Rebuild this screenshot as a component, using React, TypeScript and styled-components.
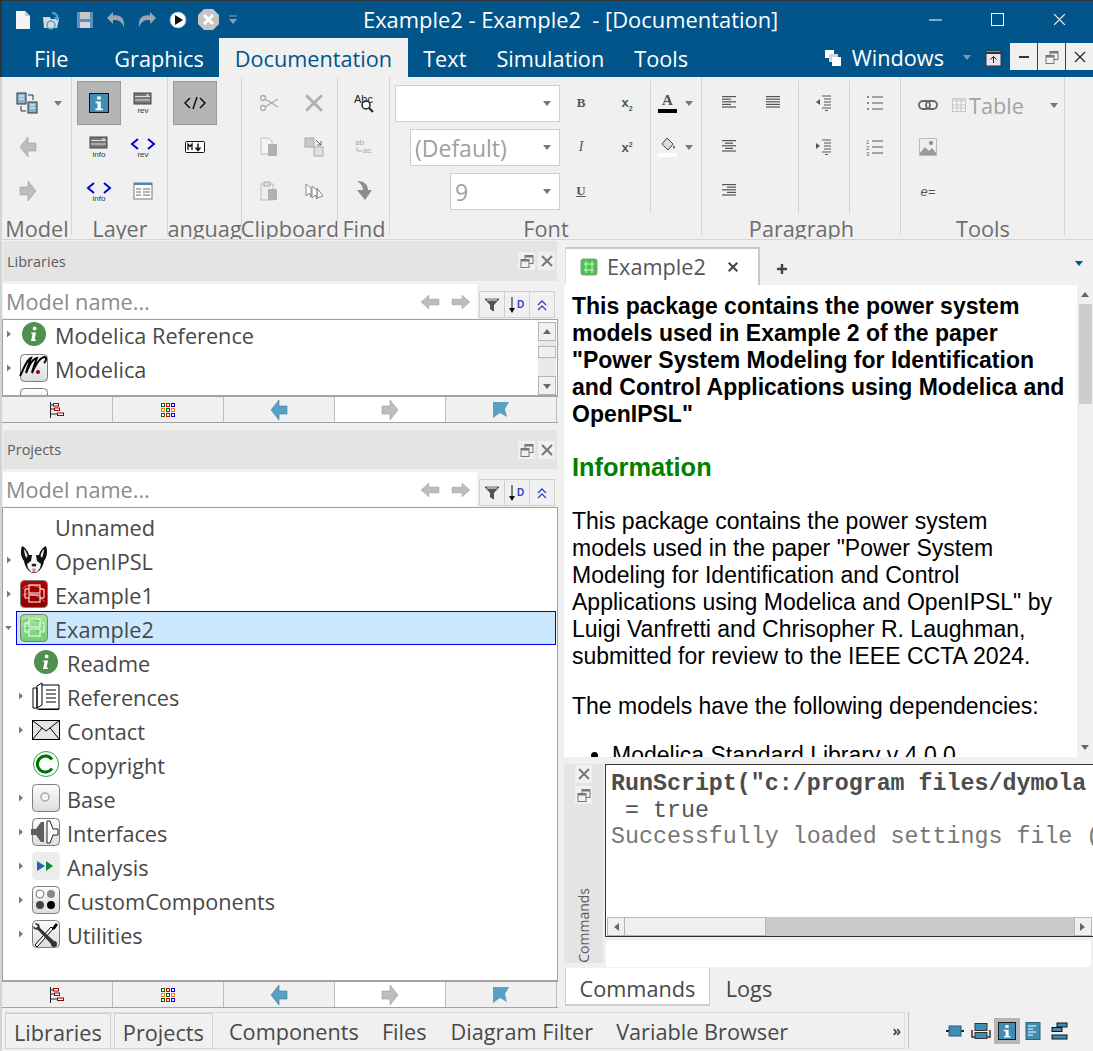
import React from "react";
import styled, { createGlobalStyle } from "styled-components";

const UI_FONT = `"Open Sans", "Noto Sans", sans-serif`;
const UI_SIZE = "21.7px";

const Global = createGlobalStyle`
  html, body { margin: 0; padding: 0; background: #f0f0f0; }
  * { box-sizing: border-box; }
`;

const Window = styled.div`
  width: 1093px;
  height: 1051px;
  overflow: hidden;
  display: flex;
  flex-direction: column;
  padding: 1px 0 0 2px;
  background: linear-gradient(#2e3338 77px, #d4d4d4 77px);
  font-family: ${UI_FONT};
  color: #444;
`;

/* title bar */
const TitleBar = styled.div`
  height: 37px;
  flex: none;
  display: flex;
  align-items: center;
  background: #01558a;
  color: #fff;
`;
const QuickAccess = styled.div`
  width: 244px;
  flex: none;
  display: flex;
  align-items: center;
  padding-left: 5px;
`;
const QatSlot = styled.span<{ $pull?: number }>`
  width: 31px;
  flex: none;
  display: flex;
  justify-content: center;
  margin-left: ${(p) => p.$pull ?? 0}px;
`;
const Title = styled.div`
  flex: none;
  width: 600px;
  padding-left: 117px;
  font-size: 21.9px;
  white-space: pre;
`;
const WinControls = styled.div`
  display: flex;
  align-items: center;
  gap: 47px;
  margin-left: 82px;
`;

/* menu */
const MenuBar = styled.div`
  height: 39px;
  flex: none;
  display: flex;
  align-items: flex-end;
  background: #01558a;
  padding-left: 17px;
`;
const MenuItem = styled.div<{ $active?: boolean; $ml?: number }>`
  flex: none;
  height: 39px;
  line-height: 41px;
  padding: 0 ${(p) => (p.$active ? 16 : 15)}px;
  margin-left: ${(p) => p.$ml ?? 0}px;
  font-size: ${UI_SIZE};
  color: ${(p) => (p.$active ? "#01558a" : "#fff")};
  background: ${(p) => (p.$active ? "#f0f0f0" : "transparent")};
`;
const MenuRight = styled.div`
  margin-left: auto;
  display: flex;
  align-items: center;
  height: 39px;
  color: #fff;
  font-size: ${UI_SIZE};
`;
const WindowsLabel = styled.span`
  margin: 0 19px 0 10px;
`;
const RestoreSlot = styled.span`
  margin: 0 6px 0 14px;
`;
const MdiButton = styled.div`
  width: 27px;
  height: 27px;
  margin-left: 1px;
  background: #f0f0f0;
  display: flex;
  align-items: center;
  justify-content: center;
  margin-top: -2px;
`;

/* ribbon */
const Ribbon = styled.div`
  height: 163px;
  flex: none;
  display: flex;
  background: #f0f0f0;
  border-bottom: 1px solid #d6d6d6;
`;
const RibbonGroup = styled.div<{ $w: number }>`
  width: ${(p) => p.$w}px;
  flex: none;
  height: 162px;
  display: flex;
  flex-direction: column;
  overflow: hidden;
  position: relative;
  &::after {
    content: "";
    position: absolute;
    right: 0;
    top: 0;
    width: 1px;
    height: 158px;
    background: #d4d4d4;
  }
`;
const GroupBody = styled.div<{ $pl?: number }>`
  height: 140px;
  flex: none;
  display: flex;
  padding-top: 4px;
  padding-left: ${(p) => p.$pl ?? 0}px;
`;
const GroupLabel = styled.div`
  white-space: nowrap;
  font-size: ${UI_SIZE};
  line-height: 24px;
  color: #6d6d6d;
  display: flex;
  justify-content: center;
`;
const ToolGrid = styled.div<{ $cols: number; $cw?: number; $pl?: number; $ml?: number }>`
  display: grid;
  grid-template-columns: repeat(${(p) => p.$cols}, ${(p) => p.$cw ?? 44}px);
  grid-auto-rows: 44px;
  flex: none;
  padding-left: ${(p) => p.$pl ?? 0}px;
  margin-left: ${(p) => p.$ml ?? 0}px;
`;
const ToolCell = styled.div<{ $active?: boolean; $w?: number }>`
  display: flex;
  align-items: center;
  justify-content: center;
  ${(p) => (p.$w ? `width: ${p.$w}px;` : "")}
  background: ${(p) => (p.$active ? "#b5b5b5" : "transparent")};
  border: 1px solid ${(p) => (p.$active ? "#9a9a9a" : "transparent")};
`;
const ModelPick = styled.div`
  display: flex;
  align-items: center;
  height: 44px;
  padding-left: 14px;
  gap: 16px;
`;
const Caret = styled.span<{ $c?: string }>`
  width: 0;
  height: 0;
  flex: none;
  border-left: 4px solid transparent;
  border-right: 4px solid transparent;
  border-top: 5px solid ${(p) => p.$c ?? "#777"};
`;
const Glyph = styled.span<{ $f: string; $u?: boolean }>`
  font: ${(p) => p.$f};
  color: #555;
  text-decoration: ${(p) => (p.$u ? "underline" : "none")};
  sub, sup { font-size: 7px; }
`;
const ComboStack = styled.div`
  width: 170px;
  flex: none;
  display: flex;
  flex-direction: column;
  align-items: flex-end;
  gap: 7px;
  padding-top: 4px;
`;
const Combo = styled.div<{ $w: number }>`
  width: ${(p) => p.$w}px;
  height: 37px;
  background: #fff;
  border: 1px solid #cfcfcf;
  display: flex;
  align-items: center;
  padding: 0 8px 0 4px;
  font-size: 23px;
  color: #a0a0a0;
  & > span:first-child { flex: 1; }
`;
const SubGroup = styled.div<{ $w: number; $line?: boolean; $lead?: boolean }>`
  width: ${(p) => p.$w}px;
  flex: none;
  height: 132px;
  border-right: ${(p) => (p.$line ? "1px solid #d4d4d4" : "none")};
  border-left: ${(p) => (p.$lead ? "1px solid #d4d4d4" : "none")};
`;
const ColorRow = styled.div`
  display: flex;
  align-items: center;
  height: 44px;
  padding-left: 7px;
  gap: 8px;
`;
const ColorTool = styled.div<{ $bar: string }>`
  width: 19px;
  display: flex;
  flex-direction: column;
  align-items: center;
  gap: 2px;
  &::after {
    content: "";
    width: 19px;
    height: 4px;
    background: ${(p) => p.$bar};
  }
`;
const TableTool = styled.div`
  display: flex;
  align-items: center;
  height: 44px;
  padding: 4px 0 0 17px;
  font-size: ${UI_SIZE};
  color: #a3a3a3;
`;
const TableLabel = styled.span`
  width: 81px;
  margin-left: 3px;
`;
const ToolsColumn = styled.div`
  width: 164px;
`;

/* main */
const Main = styled.div`
  flex: 1;
  min-height: 0;
  display: flex;
`;
const LeftDock = styled.div`
  width: 561px;
  flex: none;
  display: flex;
  flex-direction: column;
  background: #f0f0f0;
  padding: 1px 6px 0 1px;
  gap: 7px;
`;
const Panel = styled.div<{ $h: number }>`
  height: ${(p) => p.$h}px;
  flex: none;
  display: flex;
  flex-direction: column;
`;
const DockHeader = styled.div<{ $h: number }>`
  height: ${(p) => p.$h}px;
  flex: none;
  background: #e4e4e4;
  display: flex;
  align-items: center;
  justify-content: space-between;
  padding: 0 2px 0 4px;
  font-size: 14.5px;
  color: #5c5c5c;
  margin-bottom: 3px;
`;
const HeaderBtns = styled.div`
  display: flex;
  gap: 3px;
`;
const SmallBtn = styled.div`
  width: 17px;
  height: 18px;
  background: #f0f0f0;
  display: flex;
  align-items: center;
  justify-content: center;
`;
const SearchRow = styled.div`
  height: 34px;
  flex: none;
  display: flex;
  align-items: flex-end;
`;
const SearchInput = styled.div`
  width: 474px;
  height: 34px;
  flex: none;
  background: #fff;
  display: flex;
  align-items: center;
  padding: 1px 6px 0 3px;
  font-size: ${UI_SIZE};
  color: #8b8b8b;
  & > span:first-child { flex: 1; }
  & > svg { margin-left: 11px; }
`;
const FilterGroup = styled.div`
  margin-left: 2px;
  display: flex;
`;
const FilterBtn = styled.div`
  width: 26px;
  height: 27px;
  margin-right: -1px;
  background: #f0f0f0;
  border: 1px solid #cfcfcf;
  display: flex;
  align-items: center;
  justify-content: center;
`;
const TreeBox = styled.div`
  flex: 1;
  min-height: 0;
  margin: 1px -1px 0;
  background: #fff;
  border: 1px solid #a3a3a3;
  border-bottom: 2px solid #a3a3a3;
  display: flex;
  overflow: hidden;
`;
const TreeList = styled.div<{ $mt: number }>`
  flex: 1;
  min-width: 0;
  margin-top: ${(p) => p.$mt}px;
  padding-right: 1px;
`;
const TreeRow = styled.div<{ $level: number }>`
  height: 34px;
  display: flex;
  align-items: center;
  padding-left: ${(p) => 2 + p.$level * 12}px;
`;
const Twisty = styled.span`
  width: 11px;
  flex: none;
  display: flex;
  align-items: center;
`;
const RowBody = styled.div<{ $selected?: boolean }>`
  flex: 1;
  height: 34px;
  display: flex;
  align-items: center;
  gap: 7px;
  padding-left: 2px;
  border: 1px solid ${(p) => (p.$selected ? "#0000e6" : "transparent")};
  background: ${(p) => (p.$selected ? "#cce8ff" : "transparent")};
  font-size: ${UI_SIZE};
  color: #484848;
  white-space: nowrap;
`;
const NodeLabel = styled.span`
  margin-top: 2px;
`;
const IconSlot = styled.span`
  width: 29px;
  height: 29px;
  flex: none;
  display: flex;
  align-items: center;
  justify-content: center;
`;
const VScroll = styled.div`
  width: 18px;
  margin: 2px 1px 0 0;
  flex: none;
  display: flex;
  flex-direction: column;
  background: #e9e9e9;
`;
const ScrollBtn = styled.div`
  height: 19px;
  flex: none;
  background: #f0f0f0;
  border: 1px solid #b5b5b5;
  display: flex;
  align-items: center;
  justify-content: center;
`;
const ScrollThumb = styled.div`
  height: 12px;
  margin-top: 5px;
  background: #f0f0f0;
  border: 1px solid #b5b5b5;
`;
const ScrollGap = styled.div`
  flex: 1;
`;
const NavTabs = styled.div`
  height: 26px;
  flex: none;
  margin: 0 -1px;
  display: grid;
  grid-template-columns: 111px 111px 111px 111px 111px;
  border-bottom: 1px solid #a3a3a3;
`;
const NavTab = styled.div<{ $on?: boolean }>`
  background: ${(p) => (p.$on ? "#fff" : "#f0f0f0")};
  border-right: 1px solid #bdbdbd;
  display: flex;
  align-items: center;
  justify-content: center;
`;

/* right side */
const RightDock = styled.div`
  flex: 1;
  min-width: 0;
  display: flex;
  flex-direction: column;
  background: #f0f0f0;
  padding-top: 5px;
`;
const DocTabs = styled.div`
  height: 40px;
  flex: none;
  display: flex;
  align-items: flex-end;
  padding-left: 2px;
`;
const DocTab = styled.div`
  width: 195px;
  height: 38px;
  background: #fff;
  border-top: 2px solid #c9c9c9;
  border-right: 2px solid #c9c9c9;
  border-left: 1px solid #dcdcdc;
  display: flex;
  align-items: center;
  padding-left: 14px;
  font-size: ${UI_SIZE};
  color: #555;
`;
const DocTabLabel = styled.span`
  margin: -2px 0 0 9px;
  width: 120px;
`;
const PlusSign = styled.span`
  margin-left: 17px;
  margin-bottom: 11px;
  display: flex;
`;
const TabMenu = styled.span`
  margin-left: auto;
  margin-right: 9px;
  margin-bottom: 17px;
  display: flex;
`;
const DocArea = styled.div`
  height: 472px;
  flex: none;
  display: flex;
  padding-left: 1px;
`;
const DocText = styled.div`
  flex: 1;
  min-width: 0;
  background: #fff;
  padding: 8px 0 0 8px;
  overflow: hidden;
  font-family: "Liberation Sans", Arial, sans-serif;
  font-size: 23px;
  line-height: 27px;
  color: #000;
`;
const Lead = styled.div`
  font-weight: bold;
  white-space: pre;
`;
const Heading = styled.div`
  font-weight: bold;
  color: #008000;
  font-size: 25.4px;
  margin: 26px 0 27px;
`;
const Para = styled.div<{ $mb: number }>`
  white-space: pre;
  margin-bottom: ${(p) => p.$mb}px;
`;
const Bullets = styled.ul`
  margin: 0;
  padding-left: 40px;
  white-space: nowrap;
`;
const DocScroll = styled.div`
  width: 16px;
  flex: none;
  display: flex;
  flex-direction: column;
  align-items: center;
  padding: 5px 0;
`;
const DocThumb = styled.div`
  width: 13px;
  height: 100px;
  margin-top: 4px;
  background: #cdcdcd;
`;
const Console = styled.div`
  height: 211px;
  flex: none;
  display: flex;
  padding: 7px 0 0 1px;
`;
const ConsoleStrip = styled.div`
  width: 39px;
  height: 199px;
  flex: none;
  background: #e4e4e4;
  display: flex;
  flex-direction: column;
  align-items: center;
  gap: 3px;
  padding-top: 1px;
`;
const VerticalLabel = styled.div`
  margin-top: auto;
  writing-mode: vertical-rl;
  transform: rotate(180deg);
  font-size: 14px;
  color: #5c5c5c;
`;
const ConsoleMain = styled.div`
  flex: 1;
  min-width: 0;
  margin-left: 2px;
  display: flex;
  flex-direction: column;
`;
const Output = styled.div`
  height: 173px;
  flex: none;
  background: #fff;
  border: 1px solid #333;
  border-right: none;
  display: flex;
  flex-direction: column;
`;
const OutputText = styled.div`
  flex: 1;
  overflow: hidden;
  padding: 6px 0 0 5px;
  font-family: "Liberation Mono", "Courier New", monospace;
  font-size: 23.3px;
  line-height: 26.5px;
  white-space: pre;
`;
const OutLine = styled.div<{ $bold?: boolean; $c: string }>`
  font-weight: ${(p) => (p.$bold ? "bold" : "normal")};
  color: ${(p) => p.$c};
`;
const HScroll = styled.div`
  height: 19px;
  margin: 0 1px;
  flex: none;
  background: #c9c9c9;
  display: flex;
`;
const HBtn = styled.div`
  width: 18px;
  background: #f0f0f0;
  border: 1px solid #b5b5b5;
  display: flex;
  align-items: center;
  justify-content: center;
`;
const HThumb = styled.div`
  width: 141px;
  background: #f0f0f0;
  border: 1px solid #b5b5b5;
  border-left: none;
`;
const CommandInput = styled.div`
  height: 27px;
  flex: none;
  margin: 3px 2px 0 1px;
  background: #fff;
`;
const ConsoleTabs = styled.div`
  height: 40px;
  flex: none;
  display: flex;
  align-items: flex-start;
  padding-left: 2px;
  font-size: ${UI_SIZE};
`;
const ConsoleTab = styled.div<{ $on?: boolean }>`
  width: ${(p) => (p.$on ? 145 : 70)}px;
  height: 38px;
  line-height: 42px;
  text-align: center;
  background: ${(p) => (p.$on ? "#fff" : "transparent")};
  color: #484848;
  ${(p) => (p.$on ? "border: 1px solid #cfcfcf; border-top: none; border-bottom-width: 2px;" : "margin-left: 4px;")}
`;

/* status */
const StatusBar = styled.div`
  height: 41px;
  flex: none;
  display: flex;
  align-items: center;
  background: #f0f0f0;
  padding-left: 3px;
`;
const DockTabs = styled.div`
  width: 900px;
  height: 37px;
  flex: none;
  display: flex;
  align-items: center;
  border: 1px solid #dcdcdc;
  font-size: ${UI_SIZE};
`;
const DockTab = styled.div<{ $x: number; $box?: boolean }>`
  margin-left: ${(p) => p.$x}px;
  height: 36px;
  line-height: 37px;
  padding: 0 ${(p) => (p.$box ? 8 : 0)}px;
  white-space: nowrap;
  color: #484848;
  border: ${(p) => (p.$box ? "1px solid #d0d0d0" : "none")};
`;
const More = styled.span`
  margin-left: auto;
  margin-right: 3px;
  font-size: 14px;
  font-weight: bold;
  line-height: 1;
`;
const StatusSep = styled.div`
  width: 1px;
  height: 37px;
  margin-left: 3px;
  background: #bfbfbf;
`;
const ViewIcons = styled.div`
  display: flex;
  align-items: center;
  margin-left: 33px;
`;
const ViewBtn = styled.div<{ $on?: boolean }>`
  width: 26px;
  height: 26px;
  display: flex;
  align-items: center;
  justify-content: center;
  background: ${(p) => (p.$on ? "#b5b5b5" : "transparent")};
`;

/* ---- drawings ---- */
const Art = styled.svg`
  display: block;
  flex: none;
  overflow: visible;
`;

const Svg = ({ s = 20, w, h, children }: { s?: number; w?: number; h?: number; children: React.ReactNode }) => (
  <Art width={w ?? s} height={h ?? s} viewBox={`0 0 ${w ?? s} ${h ?? s}`}>
    {children}
  </Art>
);

const Triangle = ({ dir, c = "#666" }: { dir: "r" | "d" | "u" | "l"; c?: string }) => {
  const pts = { r: "2,1 7,5 2,9", d: "1,3 9,3 5,8", u: "1,7 9,7 5,2", l: "8,1 3,5 8,9" }[dir];
  return (
    <Svg s={10}>
      <polygon points={pts} fill={c} />
    </Svg>
  );
};

const Twist = ({ open }: { open?: boolean }) => (
  <Svg s={8}>
    <polygon points={open ? "0,2 7,2 3.5,6" : "2,0.5 6,4 2,7.5"} fill="#7a7a7a" />
  </Svg>
);

const BlockArrow = ({ dir, c = "#bdbdbd", d = "#9a9a9a" }: { dir: "l" | "r"; c?: string; d?: string }) => (
  <Svg w={18} h={22}>
    <polygon
      points={dir === "r" ? "1,7 9,7 9,1 17,11 9,21 9,15 1,15" : "17,7 9,7 9,1 1,11 9,21 9,15 17,15"}
      fill={c}
      stroke={d}
      strokeWidth="0.6"
    />
  </Svg>
);

const ThinArrow = ({ dir }: { dir: "l" | "r" }) => (
  <Svg w={20} h={16}>
    <polygon
      points={dir === "r" ? "1,5 11,5 11,1 19,8 11,15 11,11 1,11" : "19,5 9,5 9,1 1,8 9,15 9,11 19,11"}
      fill="#bcbcbc"
      stroke="#a8a8a8"
      strokeWidth="0.5"
    />
  </Svg>
);

const Lines = ({ rows }: { rows: [number, number][] }) => (
  <Svg s={18}>
    {rows.map(([a, b], i) => (
      <rect key={i} x={a} y={2 + i * 2.6} width={b - a} height="1.2" fill="#555" />
    ))}
  </Svg>
);

const InfoSquare = ({ s = 20 }: { s?: number }) => (
  <Art width={s} height={s} viewBox="0 0 20 20">
    <rect x="0.5" y="0.5" width="19" height="19" fill="#3f8db5" stroke="#111" />
    <rect x="8.2" y="3.5" width="3.6" height="3" fill="#fff" />
    <path d="M6.5 8.5h5.3v7h2v1.8H6.5v-1.8h2v-5.2h-2z" fill="#fff" />
  </Art>
);

const ListIcon = ({ label, code }: { label: string; code?: boolean }) => (
  <Svg w={26} h={22}>
    {code ? (
      <path d="M8 3L2 8l6 5M18 3l6 5-6 5" fill="none" stroke="#0000e0" strokeWidth="2" />
    ) : (
      <>
        <rect x="4" y="1" width="17" height="11" fill="#777" stroke="#444" />
        <path d="M5 4.5h15M5 8h15" stroke="#ddd" />
        <rect x="16" y="2.5" width="3" height="1" fill="#fff" />
      </>
    )}
    <text x="13" y="21" textAnchor="middle" fontSize="8" fontFamily="Liberation Sans" fill="#333">
      {label}
    </text>
  </Svg>
);

const LargeInfo = ({ s = 24 }: { s?: number }) => (
  <Art width={s} height={s} viewBox="0 0 24 24">
    <circle cx="12" cy="12" r="12" fill="#4f8f4f" />
    <path d="M12.6 4.5a1.9 1.9 0 1 1 0 3.8 1.9 1.9 0 0 1 0-3.8zM9.5 10.5h4.6l-1.6 7h1.500l-.3 1.500H9l1.500-7H9.200z" fill="#fff" />
  </Art>
);

const Tile = ({ children, top = "#fdfdfd", bot = "#dcdcdc" }: { children?: React.ReactNode; top?: string; bot?: string }) => (
  <Art width="28" height="28" viewBox="0 0 28 28">
    <defs>
      <linearGradient id={`t${top.slice(1)}`} x1="0" y1="0" x2="0" y2="1">
        <stop offset="0" stopColor={top} />
        <stop offset="1" stopColor={bot} />
      </linearGradient>
    </defs>
    <rect x="0.5" y="0.5" width="27" height="27" rx="4" fill={`url(#t${top.slice(1)})`} stroke="#7d7d7d" />
    {children}
  </Art>
);

const PackageArt = ({ stroke, wave }: { stroke: string; wave: string }) => (
  <g fill="none">
    <path d="M3 8c6-5 16-3 22 4M3 15c7-3 15 0 22 7" stroke={wave} />
    <rect x="9" y="5" width="11" height="8" stroke={stroke} />
    <rect x="9" y="15" width="11" height="7" stroke={stroke} />
    <path d="M9 9H5v9h4M20 9h4v9h-4" stroke={stroke} />
  </g>
);

const PackageIcon = ({ kind }: { kind: "red" | "green" }) =>
  kind === "red" ? (
    <Tile top="#b40000" bot="#8f0000">
      <PackageArt stroke="#fff" wave="#e06a8a" />
    </Tile>
  ) : (
    <Tile top="#a6e59a" bot="#72cf74">
      <PackageArt stroke="#f2fff2" wave="#3fb565" />
    </Tile>
  );

const ModelicaIcon = () => (
  <Tile>
    <path
      d="M0 22C4 15 6 6 11 4 9 9 7 15 6 19 9 12 12 5 17 4 15 9 13 14 12 19 15 12 20 3 25 3c2 1 1 4-1 6"
      fill="none"
      stroke="#000"
      strokeWidth="2"
    />
    <circle cx="18" cy="18" r="2" fill="#a00000" />
  </Tile>
);

const DogIcon = () => (
  <Art width="28" height="28" viewBox="0 0 28 28">
    <path d="M2 0c3 1 6 5 7 9h10c1-4 4-8 7-9 2 6 1 11-2 15-1 6-5 12-10 12S5 21 4 15C1 11 0 6 2 0z" fill="#111" />
    <path d="M4 3c2 2 3 4 3.500 7L6 12C5 9 4 6 4 3zM24 3c-2 2-3 4-3.500 7L22 12c1-3 2-6 2-9z" fill="#e6e6e6" />
    <path d="M12 9h4l1 6 4 3-1 4-3 4h-6l-3-4-1-4 4-3z" fill="#f6f6f6" />
    <ellipse cx="14" cy="19" rx="2.500" ry="1.500" fill="#222" />
    <path d="M12 22.500h4l-.8 4h-2.400z" fill="#e9808a" />
  </Art>
);

const BooksIcon = () => (
  <Svg s={28}>
    <path d="M1 6h4v20H1zM5 4l5-3v22l-5 3zM10 3h17v24H5" fill="#fff" stroke="#000" />
    <path d="M14 8h10M14 12h10M14 16h10M14 20h10" stroke="#000" />
    <rect x="7" y="27" width="20" height="1" fill="#000" />
  </Svg>
);

const MailIcon = () => (
  <Svg s={28}>
    <rect x="0.500" y="4.500" width="27" height="19" fill="#e4e4e4" stroke="#000" />
    <path d="M0.500 4.500L14 15 27.500 4.500M0.500 23.500L10 12M27.500 23.500L18 12" fill="none" stroke="#000" />
  </Svg>
);

const CopyIcon = () => (
  <Svg s={28}>
    <circle cx="14" cy="14" r="12.500" fill="none" stroke="#2f9e4a" />
    <path d="M20 9.500a8 8 0 1 0 0 9" fill="none" stroke="#007000" strokeWidth="3" />
  </Svg>
);

const InterfaceIcon = () => (
  <Tile>
    <path d="M-1 11h5l5-7h3v20H9l-5-7h-5z" fill="#5e5e5e" />
    <path d="M15 3h3l3 8h5v6h-5l-3 8h-3z" fill="#fff" stroke="#222" />
  </Tile>
);

const AnalysisIcon = () => (
  <Art width="28" height="28" viewBox="0 0 28 28">
    <rect width="28" height="28" rx="4" fill="#ececec" />
    <polygon points="5,9 13,14 5,19" fill="#2563b8" />
    <polygon points="14,9 21,14 14,19" fill="#0b8a3a" />
  </Art>
);

const ToolsArt = () => (
  <Tile>
    <path d="M3 25L19 7l2 2L5 27z" fill="#fff" stroke="#000" />
    <path d="M20 8l4-5 2 2-4 5z" fill="#000" />
    <path d="M3 3l4 1 1 4 14 13a3 3 0 1 1-3 3L6 10 2 9 1 6l3 2 2-2-3-2z" fill="#333" />
  </Tile>
);

const CloseGlyph = ({ c = "#777", s = 14, w = 2 }: { c?: string; s?: number; w?: number }) => (
  <Art width={s} height={s} viewBox="0 0 14 14">
    <path d="M2 2l10 10M12 2L2 12" stroke={c} strokeWidth={w} fill="none" />
  </Art>
);

const FloatGlyph = () => (
  <Svg s={14}>
    <rect x="5" y="1.500" width="8" height="8" fill="none" stroke="#777" />
    <rect x="5" y="1.500" width="8" height="2" fill="#777" />
    <rect x="1" y="5.500" width="8" height="8" fill="#f0f0f0" stroke="#777" />
    <rect x="1" y="5.500" width="8" height="2" fill="#777" />
  </Svg>
);

const TreeNavIcon = () => (
  <Svg w={14} h={16}>
    <path d="M0.500 0v16M1 3h3M1 7h3M1 12h6" stroke="#222" fill="none" />
    <rect x="3.500" y="1.500" width="5" height="2.500" fill="#fff" stroke="#900" />
    <rect x="4.500" y="6" width="5" height="2.500" fill="#fff" stroke="#900" />
    <rect x="7.500" y="11" width="6" height="2.500" fill="#fff" stroke="#900" />
  </Svg>
);

const GridNavIcon = () => {
  const colors = ["#007000", "#e00000", "#0000e6", "#ff7a1a", "#007000", "#ff7a1a", "#007000", "#e00000", "#0000e6"];
  return (
    <Svg s={16}>
      {colors.map((c, i) => (
        <rect key={i} x={1.5 + (i % 3) * 5} y={1.5 + Math.floor(i / 3) * 5} width="3" height="3" fill="#fff" stroke={c} />
      ))}
    </Svg>
  );
};

const FilterTools = () => (
  <FilterGroup>
    <FilterBtn>
      <Svg s={16}>
        <path d="M1 2h14L9.500 8v6l-3-2V8z" fill="#555" stroke="#222" strokeWidth="0.6" />
        <path d="M3 3h10" stroke="#fff" />
      </Svg>
    </FilterBtn>
    <FilterBtn>
      <Svg w={20} h={18}>
        <path d="M5 1v14" stroke="#111" />
        <path d="M2 12l3 5 3-5z" fill="#111" />
        <text x="10" y="12" fontSize="10" fontWeight="bold" fontFamily="Liberation Sans" fill="#3344c4">
          D
        </text>
      </Svg>
    </FilterBtn>
    <FilterBtn>
      <Svg s={14}>
        <path d="M3 7l4-4 4 4M3 12l4-4 4 4" fill="none" stroke="#3344c4" strokeWidth="1.300" />
      </Svg>
    </FilterBtn>
  </FilterGroup>
);

const NavStrip = () => (
  <NavTabs>
    <NavTab>
      <TreeNavIcon />
    </NavTab>
    <NavTab>
      <GridNavIcon />
    </NavTab>
    <NavTab>
      <BlockArrow dir="l" c="#5a9fc4" d="#3b7ea3" />
    </NavTab>
    <NavTab $on>
      <BlockArrow dir="r" />
    </NavTab>
    <NavTab>
      <Svg s={18}>
        <polygon points="1,1 17,1 13,8 15,16 8,12 1,17" fill="#5a9fc4" />
      </Svg>
    </NavTab>
  </NavTabs>
);

const ViewIcon = ({ kind }: { kind: "box" | "print" | "lines" | "stack" }) => (
  <Svg s={20}>
    {kind === "box" && (
      <>
        <path d="M1 10h18" stroke="#222" strokeWidth="2" />
        <rect x="4" y="5" width="12" height="10" fill="#3f8db5" stroke="#2a5f7d" />
      </>
    )}
    {kind === "print" && (
      <>
        <path d="M1 9v7h18V9" fill="none" stroke="#333" strokeWidth="1.500" />
        <rect x="4" y="2.500" width="12" height="7" fill="#3f8db5" stroke="#333" />
        <rect x="4" y="11.500" width="12" height="6" fill="#3f8db5" stroke="#333" />
      </>
    )}
    {kind === "lines" && (
      <>
        <rect x="3" y="1.500" width="14" height="17" fill="#3f8db5" stroke="#2a5f7d" />
        <path d="M5 5h8M5 8h5M5 11h8M5 14h5" stroke="#fff" />
      </>
    )}
    {kind === "stack" && (
      <>
        <rect x="8" y="2" width="10" height="4" fill="#3f8db5" stroke="#111" />
        <rect x="3" y="6.500" width="10" height="4" fill="#3f8db5" stroke="#111" />
        <rect x="3" y="14" width="15" height="4" fill="#3f8db5" stroke="#111" />
      </>
    )}
  </Svg>
);

const ALIGN_LEFT: [number, number][] = [[2, 16], [2, 11], [2, 16], [2, 11], [2, 16]];
const ALIGN_FULL: [number, number][] = [[2, 16], [2, 16], [2, 16], [2, 16], [2, 16]];
const ALIGN_CENTER: [number, number][] = [[2, 16], [5, 13], [2, 16], [5, 13], [2, 16]];
const ALIGN_RIGHT: [number, number][] = [[2, 16], [7, 16], [2, 16], [7, 16], [2, 16]];

type TreeNode = { name: string; level: number; icon?: React.ReactNode; arrow?: "open" | "closed"; selected?: boolean };

const LIBRARY_TREE: TreeNode[] = [
  { name: "Modelica Reference", level: 0, arrow: "closed", icon: <LargeInfo /> },
  { name: "Modelica", level: 0, arrow: "closed", icon: <ModelicaIcon /> },
  { name: "", level: 0, icon: <Tile /> },
];

const PROJECT_TREE: TreeNode[] = [
  { name: "Unnamed", level: 0 },
  { name: "OpenIPSL", level: 0, arrow: "closed", icon: <DogIcon /> },
  { name: "Example1", level: 0, arrow: "closed", icon: <PackageIcon kind="red" /> },
  { name: "Example2", level: 0, arrow: "open", selected: true, icon: <PackageIcon kind="green" /> },
  { name: "Readme", level: 1, icon: <LargeInfo /> },
  { name: "References", level: 1, arrow: "closed", icon: <BooksIcon /> },
  { name: "Contact", level: 1, arrow: "closed", icon: <MailIcon /> },
  { name: "Copyright", level: 1, icon: <CopyIcon /> },
  {
    name: "Base",
    level: 1,
    arrow: "closed",
    icon: (
      <Tile>
        <circle cx="13" cy="13" r="4" fill="#f4f4f4" stroke="#aaa" strokeWidth="1.500" />
      </Tile>
    ),
  },
  { name: "Interfaces", level: 1, arrow: "closed", icon: <InterfaceIcon /> },
  { name: "Analysis", level: 1, arrow: "closed", icon: <AnalysisIcon /> },
  {
    name: "CustomComponents",
    level: 1,
    arrow: "closed",
    icon: (
      <Tile>
        <circle cx="8" cy="8" r="4" fill="#fff" stroke="#777" />
        <circle cx="19" cy="8" r="4" fill="#888" />
        <circle cx="8" cy="19" r="4" fill="#444" />
        <circle cx="19" cy="19" r="4" fill="#000" />
      </Tile>
    ),
  },
  { name: "Utilities", level: 1, arrow: "closed", icon: <ToolsArt /> },
];

const Tree = ({ nodes, mt, children }: { nodes: TreeNode[]; mt: number; children?: React.ReactNode }) => (
  <TreeBox>
    <TreeList $mt={mt}>
      {nodes.map((n, i) => (
        <TreeRow key={i} $level={n.level}>
          <Twisty>{n.arrow && <Twist open={n.arrow === "open"} />}</Twisty>
          <RowBody $selected={n.selected}>
            <IconSlot>{n.icon}</IconSlot>
            <NodeLabel>{n.name}</NodeLabel>
          </RowBody>
        </TreeRow>
      ))}
    </TreeList>
    {children}
  </TreeBox>
);

const Search = () => (
  <SearchRow>
    <SearchInput>
      <span>Model name...</span>
      <ThinArrow dir="l" />
      <ThinArrow dir="r" />
    </SearchInput>
    <FilterTools />
  </SearchRow>
);

const Header = ({ title, h }: { title: string; h: number }) => (
  <DockHeader $h={h}>
    {title}
    <HeaderBtns>
      <SmallBtn>
        <FloatGlyph />
      </SmallBtn>
      <SmallBtn>
        <CloseGlyph />
      </SmallBtn>
    </HeaderBtns>
  </DockHeader>
);

export default function App() {
  return (
    <Window>
      <Global />
      <TitleBar>
        <QuickAccess>
          <QatSlot>
            <Svg w={16} h={20}>
              <path d="M1 1h9l5 5v13H1z" fill="#f4f4f4" />
              <path d="M10 1v5h5z" fill="#c8c8c8" />
            </Svg>
          </QatSlot>
          <QatSlot $pull={-2}>
            <Svg w={20} h={20}>
              <path d="M1 7h7l1 2h8l-2 9H2z" fill="#d9d9d9" />
              <path d="M10 2c4 0 6 2 6 5h2l-3 4-3-4h2c0-2-2-3-4-3z" fill="#4f9fce" />
              <circle cx="9" cy="15" r="4" fill="none" stroke="#4f9fce" strokeWidth="1.500" />
            </Svg>
          </QatSlot>
          <QatSlot $pull={2}>
            <Svg w={18} h={18}>
              <path d="M1 1h16v16H1z" fill="#5a92bd" />
              <rect x="4" y="1" width="10" height="7" fill="#c7c7c7" />
              <rect x="4" y="11" width="10" height="6" fill="#d7d7d7" />
            </Svg>
          </QatSlot>
          <QatSlot>
            <Svg w={20} h={18}>
              <path d="M1 7l6-6v3.500c7-1 12 2 11 12-2-6-5-7.500-11-7.500V13z" fill="#9aa7b0" />
            </Svg>
          </QatSlot>
          <QatSlot>
            <Svg w={20} h={18}>
              <path d="M19 7l-6-6v3.500C6 3.500 1 6.500 2 16.500c2-6 5-7.500 11-7.500V13z" fill="#9aa7b0" />
            </Svg>
          </QatSlot>
          <QatSlot>
            <Svg s={18}>
              <circle cx="9" cy="9" r="8" fill="#fff" stroke="#7fb2d2" />
              <polygon points="6,4 14,9 6,14" fill="#111" />
            </Svg>
          </QatSlot>
          <QatSlot>
            <Svg s={21}>
              <polygon points="6,0 15,0 21,6 21,15 15,21 6,21 0,15 0,6" fill="#c4c4c4" />
              <path d="M6 6l9 9M15 6l-9 9" stroke="#fff" strokeWidth="3" />
            </Svg>
          </QatSlot>
          <QatSlot $pull={-7}>
            <Svg w={8} h={10}>
              <path d="M0 1h8" stroke="#8aa0ad" />
              <polygon points="0,4 8,4 4,9" fill="#8aa0ad" />
            </Svg>
          </QatSlot>
        </QuickAccess>
        <Title>Example2 - Example2  - [Documentation]</Title>
        <WinControls>
          <Svg s={15}>
            <path d="M1 8h13" stroke="#fff" />
          </Svg>
          <Svg s={15}>
            <rect x="1.500" y="1.500" width="12" height="12" fill="none" stroke="#fff" />
          </Svg>
          <CloseGlyph c="#fff" s={15} w={1} />
        </WinControls>
      </TitleBar>

      <MenuBar>
        <MenuItem>File</MenuItem>
        <MenuItem $ml={16}>Graphics</MenuItem>
        <MenuItem $active>Documentation</MenuItem>
        <MenuItem>Text</MenuItem>
        <MenuItem>Simulation</MenuItem>
        <MenuItem>Tools</MenuItem>
        <MenuRight>
          <Svg s={18}>
            <rect x="1" y="1" width="9" height="8" fill="#fff" />
            <rect x="5" y="5" width="9" height="8" fill="#cfd8e0" />
            <rect x="8" y="8" width="9" height="9" fill="#fff" />
          </Svg>
          <WindowsLabel>Windows</WindowsLabel>
          <Caret $c="#7f9bb0" />
          <RestoreSlot>
            <Svg s={18}>
              <rect x="1" y="2" width="15" height="15" fill="#e8e8e8" stroke="#333" />
              <path d="M1 4h15" stroke="#333" strokeWidth="2" />
              <path d="M8.500 14V8M5.500 10.500l3-3 3 3" stroke="#222" fill="none" />
            </Svg>
          </RestoreSlot>
          <MdiButton>
            <Svg s={14}>
              <path d="M2 7h10" stroke="#333" strokeWidth="2" />
            </Svg>
          </MdiButton>
          <MdiButton>
            <FloatGlyph />
          </MdiButton>
          <MdiButton>
            <CloseGlyph c="#222" w={1.2} />
          </MdiButton>
        </MenuRight>
      </MenuBar>

      <Ribbon>
        <RibbonGroup $w={70}>
          <GroupBody>
            <ToolGrid $cols={1} $cw={69}>
              <ModelPick>
                <Svg s={22}>
                  <rect x="1" y="1" width="9" height="11" fill="#7fb3d0" stroke="#333" />
                  <rect x="12" y="10" width="9" height="11" fill="#7fb3d0" stroke="#333" />
                  <path d="M3 4h5M3 7h5M14 13h5M14 16h5" stroke="#fff" />
                  <path d="M12 3h5v5M10 19H5v-5" fill="none" stroke="#333" />
                </Svg>
                <Caret />
              </ModelPick>
              <ToolCell $w={52}>
                <BlockArrow dir="l" />
              </ToolCell>
              <ToolCell $w={52}>
                <BlockArrow dir="r" />
              </ToolCell>
            </ToolGrid>
          </GroupBody>
          <GroupLabel>Model</GroupLabel>
        </RibbonGroup>

        <RibbonGroup $w={96}>
          <GroupBody $pl={5}>
            <ToolGrid $cols={2}>
              <ToolCell $active>
                <InfoSquare />
              </ToolCell>
              <ToolCell>
                <ListIcon label="rev" />
              </ToolCell>
              <ToolCell>
                <ListIcon label="info" />
              </ToolCell>
              <ToolCell>
                <ListIcon label="rev" code />
              </ToolCell>
              <ToolCell>
                <ListIcon label="info" code />
              </ToolCell>
              <ToolCell>
                <Svg w={20} h={18}>
                  <rect x="1" y="1" width="18" height="16" fill="#fff" stroke="#777" />
                  <rect x="1" y="1" width="18" height="2" fill="#3f8db5" />
                  <path d="M3 7h5M10 7h7M3 10h5M10 10h7M3 13h5M10 13h7" stroke="#666" />
                </Svg>
              </ToolCell>
            </ToolGrid>
          </GroupBody>
          <GroupLabel>Layer</GroupLabel>
        </RibbonGroup>

        <RibbonGroup $w={74}>
          <GroupBody $pl={5}>
            <ToolGrid $cols={1}>
              <ToolCell $active>
                <Svg w={22} h={14}>
                  <path d="M6 2L1 7l5 5M16 2l5 5-5 5M13 1L9 13" fill="none" stroke="#111" strokeWidth="1.500" />
                </Svg>
              </ToolCell>
              <ToolCell>
                <Svg w={20} h={12}>
                  <rect x="0.500" y="0.500" width="19" height="11" rx="1" fill="#fff" stroke="#111" />
                  <path d="M3 9V3l2 2.500L7 3v6" fill="none" stroke="#111" strokeWidth="1.300" />
                  <path d="M13 2.500V8M10.500 6.500L13 9.500l2.500-3" fill="none" stroke="#111" strokeWidth="1.500" />
                </Svg>
              </ToolCell>
            </ToolGrid>
          </GroupBody>
          <GroupLabel>Language</GroupLabel>
        </RibbonGroup>

        <RibbonGroup $w={96}>
          <GroupBody $pl={4}>
            <ToolGrid $cols={2} $cw={45}>
              <ToolCell>
                <Svg s={20}>
                  <circle cx="4" cy="5" r="2.500" fill="none" stroke="#aaa" strokeWidth="1.300" />
                  <circle cx="4" cy="15" r="2.500" fill="none" stroke="#aaa" strokeWidth="1.300" />
                  <path d="M6 6l13 8M6 14l13-8" stroke="#aaa" strokeWidth="1.300" />
                </Svg>
              </ToolCell>
              <ToolCell>
                <CloseGlyph c="#b0b0b0" s={22} w={1.8} />
              </ToolCell>
              <ToolCell>
                <Svg s={20}>
                  <path d="M2 1h8l3 3v13H2z" fill="#f4f4f4" stroke="#c0c0c0" />
                  <rect x="9" y="7" width="9" height="12" fill="#b0b0b0" />
                </Svg>
              </ToolCell>
              <ToolCell>
                <Svg s={20}>
                  <rect x="1" y="1" width="9" height="9" fill="#c9c9c9" stroke="#aaa" />
                  <rect x="10" y="10" width="9" height="9" fill="#e0e0e0" stroke="#aaa" />
                  <path d="M12 3l5 5M17 4v4h-4" fill="none" stroke="#666" />
                </Svg>
              </ToolCell>
              <ToolCell>
                <Svg s={20}>
                  <rect x="2" y="3" width="12" height="16" fill="#eee" stroke="#bbb" />
                  <rect x="5" y="1" width="6" height="4" fill="#ddd" stroke="#aaa" />
                  <rect x="9" y="8" width="9" height="11" fill="#b0b0b0" />
                </Svg>
              </ToolCell>
              <ToolCell>
                <Svg s={20}>
                  <path d="M2 3v12l3-3 2 4V7zM8 5v12l3-3 2 4V9zM13 7v10l6-2z" fill="#fff" stroke="#888" />
                </Svg>
              </ToolCell>
            </ToolGrid>
          </GroupBody>
          <GroupLabel>Clipboard</GroupLabel>
        </RibbonGroup>

        <RibbonGroup $w={52}>
          <GroupBody>
            <ToolGrid $cols={1} $cw={52}>
              <ToolCell>
                <Svg w={20} h={20}>
                  <text x="0" y="10" fontSize="11" fontFamily="Liberation Sans" fill="#222">
                    Abc
                  </text>
                  <circle cx="12" cy="12" r="4" fill="#fff" fillOpacity="0.7" stroke="#222" strokeWidth="1.500" />
                  <path d="M15 15l4 4" stroke="#222" strokeWidth="2" />
                </Svg>
              </ToolCell>
              <ToolCell>
                <Svg w={20} h={18}>
                  <text x="1" y="7" fontSize="8" fontFamily="Liberation Sans" fill="#aaa">
                    ab
                  </text>
                  <text x="9" y="15" fontSize="8" fontFamily="Liberation Sans" fill="#aaa">
                    ac
                  </text>
                  <path d="M3 9v4h5" fill="none" stroke="#aaa" />
                </Svg>
              </ToolCell>
              <ToolCell>
                <Svg w={18} h={22}>
                  <path d="M2 1c8 0 11 4 11 9h4l-7 10-8-10h6c0-4-3-7-6-9z" fill="#8d8d8d" />
                </Svg>
              </ToolCell>
            </ToolGrid>
          </GroupBody>
          <GroupLabel>Find</GroupLabel>
        </RibbonGroup>

        <RibbonGroup $w={312}>
          <GroupBody>
            <ComboStack>
              <Combo $w={165}>
                <span />
                <Caret />
              </Combo>
              <Combo $w={150}>
                <span>(Default)</span>
                <Caret />
              </Combo>
              <Combo $w={110}>
                <span>9</span>
                <Caret />
              </Combo>
            </ComboStack>
            <ToolGrid $cols={2} $cw={46} $ml={-2}>
              <ToolCell>
                <Glyph $f="bold 13px 'Liberation Serif'">B</Glyph>
              </ToolCell>
              <ToolCell>
                <Glyph $f="bold 13px 'Liberation Sans'">
                  x<sub>2</sub>
                </Glyph>
              </ToolCell>
              <ToolCell>
                <Glyph $f="italic 14px 'Liberation Serif'">I</Glyph>
              </ToolCell>
              <ToolCell>
                <Glyph $f="bold 13px 'Liberation Sans'">
                  x<sup>2</sup>
                </Glyph>
              </ToolCell>
              <ToolCell>
                <Glyph $f="bold 13px 'Liberation Serif'" $u>
                  U
                </Glyph>
              </ToolCell>
            </ToolGrid>
            <SubGroup $w={50} $lead>
              <ColorRow>
                <ColorTool $bar="#000">
                  <Glyph $f="bold 15px/14px 'Liberation Serif'">A</Glyph>
                </ColorTool>
                <Caret />
              </ColorRow>
              <ColorRow>
                <ColorTool $bar="#fff">
                  <Svg w={16} h={14}>
                    <path d="M7 1l6 6-5 6-6-6z" fill="#ddd" stroke="#444" />
                    <path d="M14 8c1 2 1 3 0 4-1-1-1-2 0-4z" fill="#444" />
                  </Svg>
                </ColorTool>
                <Caret />
              </ColorRow>
            </SubGroup>
          </GroupBody>
          <GroupLabel>Font</GroupLabel>
        </RibbonGroup>

        <RibbonGroup $w={199}>
          <GroupBody>
            <SubGroup $w={97} $line>
              <ToolGrid $cols={2} $cw={44} $pl={5}>
                <ToolCell>
                  <Lines rows={ALIGN_LEFT} />
                </ToolCell>
                <ToolCell>
                  <Lines rows={ALIGN_FULL} />
                </ToolCell>
                <ToolCell>
                  <Lines rows={ALIGN_CENTER} />
                </ToolCell>
                <span />
                <ToolCell>
                  <Lines rows={ALIGN_RIGHT} />
                </ToolCell>
              </ToolGrid>
            </SubGroup>
            <SubGroup $w={51} $line>
              <ToolGrid $cols={1} $cw={50}>
                <ToolCell>
                  <Svg s={18}>
                    <path d="M7 2h9M9 5h7M9 8h7M9 11h7M7 14h9M10 16.500h3" stroke="#555" fill="none" />
                    <path d="M1 8l4-3v6z" fill="#555" />
                  </Svg>
                </ToolCell>
                <ToolCell>
                  <Svg s={18}>
                    <path d="M7 2h9M9 5h7M9 8h7M9 11h7M7 14h9M10 16.500h3" stroke="#555" fill="none" />
                    <path d="M5 8L1 5v6z" fill="#555" />
                  </Svg>
                </ToolCell>
              </ToolGrid>
            </SubGroup>
            <SubGroup $w={50}>
              <ToolGrid $cols={1} $cw={50}>
                <ToolCell>
                  <Svg s={18}>
                    <path d="M6 3h11M6 9h11M6 15h11" stroke="#555" />
                    <path d="M2 2v2M2 8v2M2 14v2" stroke="#888" strokeWidth="2" />
                  </Svg>
                </ToolCell>
                <ToolCell>
                  <Svg s={18}>
                    <path d="M6 3h11M6 9h11M6 15h11" stroke="#555" />
                    <text x="0" y="5.500" fontSize="6" fill="#666" fontFamily="Liberation Sans">1</text>
                    <text x="0" y="11.500" fontSize="6" fill="#666" fontFamily="Liberation Sans">2</text>
                    <text x="0" y="17.500" fontSize="6" fill="#666" fontFamily="Liberation Sans">3</text>
                  </Svg>
                </ToolCell>
              </ToolGrid>
            </SubGroup>
          </GroupBody>
          <GroupLabel>Paragraph</GroupLabel>
        </RibbonGroup>

        <RibbonGroup $w={164}>
          <GroupBody>
            <ToolsColumn>
              <TableTool>
                <Svg w={34} h={12}>
                  <rect x="1" y="2" width="11" height="8" rx="4" fill="none" stroke="#666" strokeWidth="1.800" />
                  <rect x="8" y="2" width="11" height="8" rx="4" fill="none" stroke="#666" strokeWidth="1.800" />
                </Svg>
                <Svg s={14}>
                  <rect x="0.500" y="0.500" width="13" height="13" fill="#f6f6f6" stroke="#c4c4c4" />
                  <rect x="0.500" y="0.500" width="13" height="3" fill="#d8d8d8" />
                  <path d="M5 1v12M9 1v12M1 7h12M1 10h12" stroke="#c4c4c4" />
                </Svg>
                <TableLabel>Table</TableLabel>
                <Caret />
              </TableTool>
              <ToolGrid $cols={1} $cw={54}>
                <ToolCell>
                  <Svg s={18}>
                    <rect x="0.500" y="0.500" width="17" height="17" fill="#eee" stroke="#bbb" />
                    <path d="M1 15l5-6 4 4 3-3 4 5v2H1z" fill="#999" />
                    <circle cx="12" cy="5" r="2" fill="#888" />
                  </Svg>
                </ToolCell>
                <ToolCell>
                  <Glyph $f="italic 13px 'Liberation Sans'">e=</Glyph>
                </ToolCell>
              </ToolGrid>
            </ToolsColumn>
          </GroupBody>
          <GroupLabel>Tools</GroupLabel>
        </RibbonGroup>
      </Ribbon>

      <Main>
        <LeftDock>
          <Panel $h={182}>
            <Header title="Libraries" h={40} />
            <Search />
            <Tree nodes={LIBRARY_TREE} mt={-3}>
              <VScroll>
                <ScrollBtn>
                  <Triangle dir="u" />
                </ScrollBtn>
                <ScrollThumb />
                <ScrollGap />
                <ScrollBtn>
                  <Triangle dir="d" />
                </ScrollBtn>
              </VScroll>
            </Tree>
            <NavStrip />
          </Panel>
          <Panel $h={578}>
            <Header title="Projects" h={39} />
            <Search />
            <Tree nodes={PROJECT_TREE} mt={1} />
            <NavStrip />
          </Panel>
        </LeftDock>

        <RightDock>
          <DocTabs>
            <DocTab>
              <Svg s={18}>
                <rect x="1" y="1" width="16" height="16" rx="2" fill="#4cc24c" stroke="#8a9a8a" />
                <path d="M4 6h10M4 12h10M6 3v12M12 3v12" stroke="#d8f7d0" fill="none" />
              </Svg>
              <DocTabLabel>Example2</DocTabLabel>
              <CloseGlyph c="#444" s={12} w={2.4} />
            </DocTab>
            <PlusSign>
              <Svg s={10}>
                <path d="M5 0v10M0 5h10" stroke="#444" strokeWidth="2.400" />
              </Svg>
            </PlusSign>
            <TabMenu>
              <Triangle dir="d" c="#01558a" />
            </TabMenu>
          </DocTabs>
          <DocArea>
            <DocText>
              <Lead>This package contains the power system</Lead>
              <Lead>models used in Example 2 of the paper</Lead>
              <Lead>"Power System Modeling for Identification</Lead>
              <Lead>and Control Applications using Modelica and</Lead>
              <Lead>OpenIPSL"</Lead>
              <Heading>Information</Heading>
              <Para $mb={23}>
                {`This package contains the power system
models used in the paper "Power System
Modeling for Identification and Control
Applications using Modelica and OpenIPSL" by
Luigi Vanfretti and Chrisopher R. Laughman,
submitted for review to the IEEE CCTA 2024.`}
              </Para>
              <Para $mb={22}>The models have the following dependencies:</Para>
              <Bullets>
                <li>Modelica Standard Library v 4.0.0</li>
              </Bullets>
            </DocText>
            <DocScroll>
              <Triangle dir="u" />
              <DocThumb />
              <ScrollGap />
              <Triangle dir="d" />
            </DocScroll>
          </DocArea>
          <Console>
            <ConsoleStrip>
              <SmallBtn>
                <CloseGlyph />
              </SmallBtn>
              <SmallBtn>
                <FloatGlyph />
              </SmallBtn>
              <VerticalLabel>Commands</VerticalLabel>
            </ConsoleStrip>
            <ConsoleMain>
              <Output>
                <OutputText>
                  <OutLine $bold $c="#4c4c4c">{`RunScript("c:/program files/dymola`}</OutLine>
                  <OutLine $c="#555">{` = true`}</OutLine>
                  <OutLine $c="#777">{`Successfully loaded settings file (`}</OutLine>
                </OutputText>
                <HScroll>
                  <HBtn>
                    <Triangle dir="l" />
                  </HBtn>
                  <HThumb />
                  <ScrollGap />
                  <HBtn>
                    <Triangle dir="r" />
                  </HBtn>
                </HScroll>
              </Output>
              <CommandInput />
            </ConsoleMain>
          </Console>
          <ConsoleTabs>
            <ConsoleTab $on>Commands</ConsoleTab>
            <ConsoleTab>Logs</ConsoleTab>
          </ConsoleTabs>
        </RightDock>
      </Main>

      <StatusBar>
        <DockTabs>
          <DockTab $x={-1} $box>
            Libraries
          </DockTab>
          <DockTab $x={3} $box>
            Projects
          </DockTab>
          <DockTab $x={16}>Components</DockTab>
          <DockTab $x={23}>Files</DockTab>
          <DockTab $x={24}>Diagram Filter</DockTab>
          <DockTab $x={23}>Variable Browser</DockTab>
          <More>»</More>
        </DockTabs>
        <StatusSep />
        <ViewIcons>
          <ViewBtn>
            <ViewIcon kind="box" />
          </ViewBtn>
          <ViewBtn>
            <ViewIcon kind="print" />
          </ViewBtn>
          <ViewBtn $on>
            <InfoSquare s={18} />
          </ViewBtn>
          <ViewBtn>
            <ViewIcon kind="lines" />
          </ViewBtn>
          <ViewBtn>
            <ViewIcon kind="stack" />
          </ViewBtn>
        </ViewIcons>
      </StatusBar>
    </Window>
  );
}
